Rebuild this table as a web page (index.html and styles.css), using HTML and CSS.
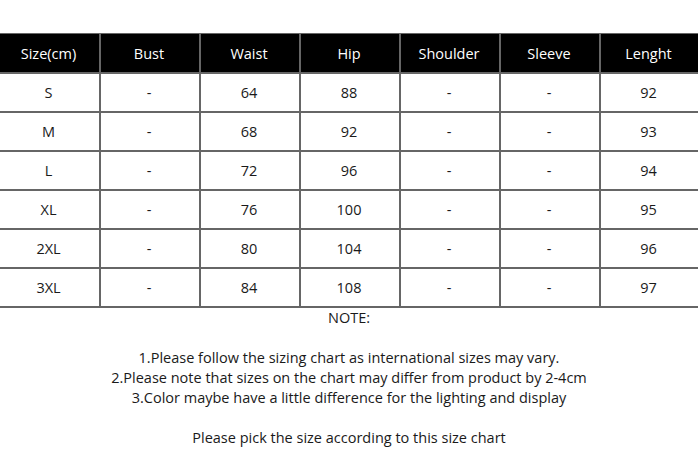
FILE: index.html
```html
<!DOCTYPE html>
<html>
<head>
<meta charset="utf-8">
<link rel="stylesheet" href="styles.css">
</head>
<body>
<div class="chart">
  <div class="cell head">Size(cm)</div><div class="cell head">Bust</div><div class="cell head">Waist</div><div class="cell head">Hip</div><div class="cell head">Shoulder</div><div class="cell head">Sleeve</div><div class="cell head">Lenght</div>
  <div class="cell">S</div><div class="cell">-</div><div class="cell">64</div><div class="cell">88</div><div class="cell">-</div><div class="cell">-</div><div class="cell">92</div>
  <div class="cell">M</div><div class="cell">-</div><div class="cell">68</div><div class="cell">92</div><div class="cell">-</div><div class="cell">-</div><div class="cell">93</div>
  <div class="cell">L</div><div class="cell">-</div><div class="cell">72</div><div class="cell">96</div><div class="cell">-</div><div class="cell">-</div><div class="cell">94</div>
  <div class="cell">XL</div><div class="cell">-</div><div class="cell">76</div><div class="cell">100</div><div class="cell">-</div><div class="cell">-</div><div class="cell">95</div>
  <div class="cell">2XL</div><div class="cell">-</div><div class="cell">80</div><div class="cell">104</div><div class="cell">-</div><div class="cell">-</div><div class="cell">96</div>
  <div class="cell">3XL</div><div class="cell">-</div><div class="cell">84</div><div class="cell">108</div><div class="cell">-</div><div class="cell">-</div><div class="cell">97</div>
</div>
<div class="notes">
  <p>NOTE:</p>
  <p class="gap">1.Please follow the sizing chart as international sizes may vary.</p>
  <p>2.Please note that sizes on the chart may differ from product by 2-4cm</p>
  <p>3.Color maybe have a little difference for the lighting and display</p>
  <p class="gap">Please pick the size according to this size chart</p>
</div>
</body>
</html>
```

FILE: styles.css
```css
html, body {
  margin: 0;
  padding: 0;
  background: #fff;
}
body {
  font-family: "Open Sans", "Noto Sans", sans-serif;
  font-size: 14.5px;
  color: #1a1a1a;
  width: 698px;
}
.chart {
  margin-top: 33px;
  display: grid;
  grid-template-columns: 99px repeat(5, 98px) 1fr;
  grid-template-rows: 38px repeat(6, 37px);
  column-gap: 2px;
  row-gap: 2px;
  background: #666;
  border-top: 1px solid #666;
  border-bottom: 2px solid #666;
}
.cell {
  background: #fff;
  display: flex;
  align-items: center;
  justify-content: center;
  padding-right: 2px;
}
.head {
  background: #000;
  color: #fff;
  padding-top: 1px;
}
.notes {
  text-align: center;
  line-height: 20px;
}
.notes p {
  margin: 0;
}
.notes .gap {
  margin-top: 20px;
}
```
